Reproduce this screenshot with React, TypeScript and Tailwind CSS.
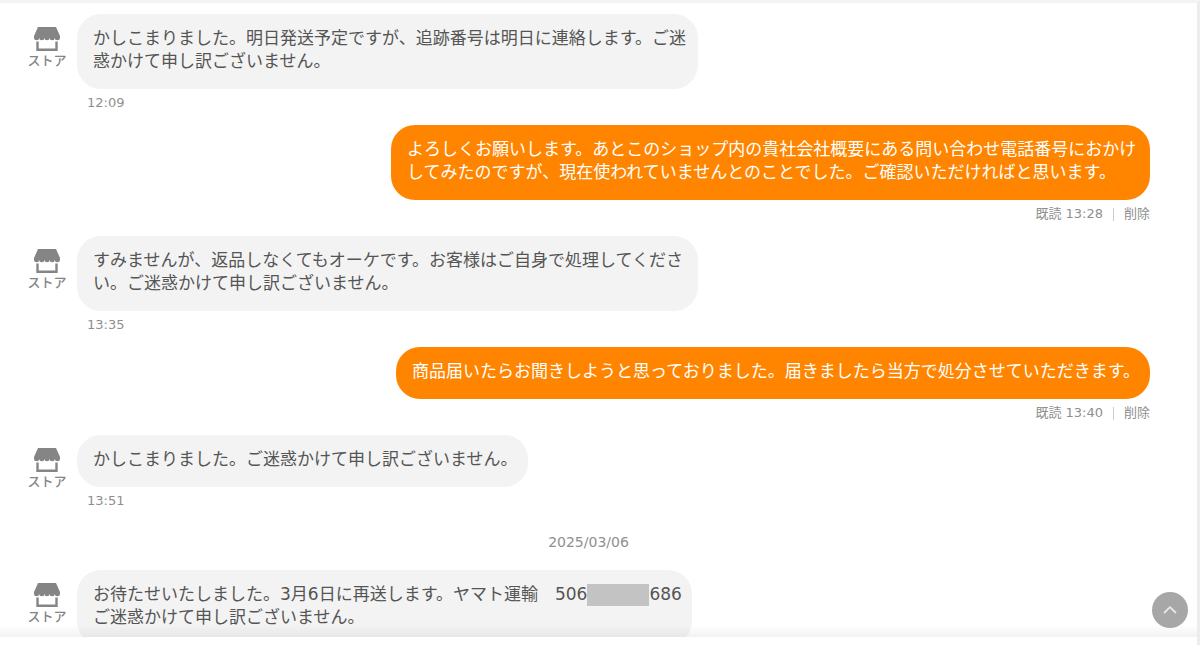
import React from 'react';

interface Message {
  id: number;
  from: 'store' | 'me';
  time?: string;
  body: React.ReactNode;
  dateBefore?: string;
}

const messages: Message[] = [
  {
    id: 1,
    from: 'store',
    time: '12:09',
    body: 'かしこまりました。明日発送予定ですが、追跡番号は明日に連絡します。ご迷惑かけて申し訳ございません。',
  },
  {
    id: 2,
    from: 'me',
    time: '13:28',
    body: 'よろしくお願いします。あとこのショップ内の貴社会社概要にある問い合わせ電話番号におかけしてみたのですが、現在使われていませんとのことでした。ご確認いただければと思います。',
  },
  {
    id: 3,
    from: 'store',
    time: '13:35',
    body: 'すみませんが、返品しなくてもオーケです。お客様はご自身で処理してください。ご迷惑かけて申し訳ございません。',
  },
  {
    id: 4,
    from: 'me',
    time: '13:40',
    body: '商品届いたらお聞きしようと思っておりました。届きましたら当方で処分させていただきます。',
  },
  {
    id: 5,
    from: 'store',
    time: '13:51',
    body: 'かしこまりました。ご迷惑かけて申し訳ございません。',
  },
  {
    id: 6,
    from: 'store',
    dateBefore: '2025/03/06',
    body: (
      <>
        お待たせいたしました。3月6日に再送します。ヤマト運輸　506
        <span className="inline-block h-[22px] w-[62px] bg-[#c3c3c3] align-middle" />
        686
        <br />
        ご迷惑かけて申し訳ございません。
      </>
    ),
  },
];

const StoreIcon: React.FC = () => (
  <svg width="26" height="24" viewBox="0 0 26 24" aria-hidden="true">
    <path
      d="M4 0h18l4 9v2a2.6 2.2 0 0 1-5.2 0 2.6 2.2 0 0 1-5.2 0 2.6 2.2 0 0 1-5.2 0 2.6 2.2 0 0 1-5.2 0 2.6 2.2 0 0 1-5.200 0V9z"
      fill="#858585"
    />
    <path d="M3.500 14.500v8.200h19v-8.200" fill="none" stroke="#858585" strokeWidth="2.400" />
  </svg>
);

const StoreMessage: React.FC<{ message: Message }> = ({ message }) => (
  <div className="flex items-start gap-[10px]">
    <div className="flex w-10 shrink-0 flex-col items-center pt-[13px]">
      <StoreIcon />
      <span className="text-[13px] font-medium leading-5 text-[#858585]">ストア</span>
    </div>
    <div className="min-w-0">
      <p className="w-fit max-w-[621px] rounded-3xl bg-[#f3f3f3] pb-4 pl-4 pr-[10px] pt-[13px] text-[17px] leading-[23px] text-[#555555]">
        {message.body}
      </p>
      {message.time && <p className="mt-1 pl-[10px] text-[13px] leading-5 text-[#8f8f8f]">{message.time}</p>}
    </div>
  </div>
);

const MyMessage: React.FC<{ message: Message }> = ({ message }) => (
  <div className="flex flex-col items-end">
    <p className="w-fit max-w-[759px] rounded-3xl bg-[#ff8500] pb-4 pl-4 pr-[10px] pt-[13px] text-[17px] leading-[23px] text-white">
      {message.body}
    </p>
    <div className="mt-1 flex items-center text-[13px] leading-5 text-[#8f8f8f]">
      <span>既読 {message.time}</span>
      <span className="mx-[10px] h-[13px] w-px bg-[#cccccc]" />
      <button type="button">削除</button>
    </div>
  </div>
);

const App: React.FC = () => {
  return (
    <div className="flex h-screen flex-col border-r-[3px] border-t-[3px] border-r-[#ededed] border-t-[#f3f3f3] bg-white font-['DejaVu_Sans','Noto_Sans_CJK_JP',sans-serif]">
      <main className="relative min-h-0 flex-1 overflow-hidden">
        <div className="flex flex-col gap-3 pl-[27px] pr-[47px] pt-[11px]">
          {messages.map((message) => (
            <React.Fragment key={message.id}>
              {message.dateBefore && (
                <p className="mb-1 mt-[7px] text-center text-sm leading-6 text-[#8f8f8f]">{message.dateBefore}</p>
              )}
              {message.from === 'store' ? <StoreMessage message={message} /> : <MyMessage message={message} />}
            </React.Fragment>
          ))}
        </div>

        {/* Fade above the input area */}
        <div className="pointer-events-none absolute inset-x-0 bottom-0 h-3 bg-linear-to-t from-black/5 to-transparent" />

        <button
          type="button"
          aria-label="上へ戻る"
          className="absolute bottom-[9px] right-[9px] flex size-9 items-center justify-center rounded-full bg-[#a7a7a7]"
        >
          <svg width="14" height="8" viewBox="0 0 14 8" fill="none" stroke="#e8e8e8" strokeWidth="1.800">
            <path d="M1 7l6-5.800L13 7" />
          </svg>
        </button>
      </main>
      <footer className="h-2 shrink-0 bg-white" />
    </div>
  );
};

export default App;
